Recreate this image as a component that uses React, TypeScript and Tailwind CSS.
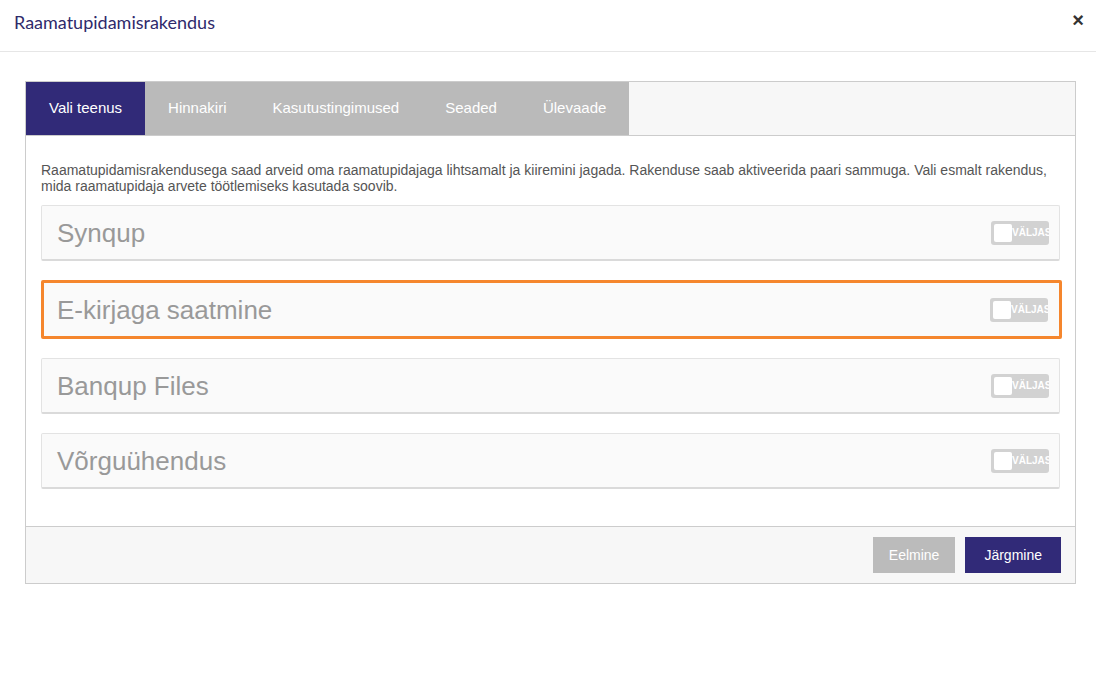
import { useState } from 'react';

const tabs = ['Vali teenus', 'Hinnakiri', 'Kasutustingimused', 'Seaded', 'Ülevaade'];
const services = ['Synqup', 'E-kirjaga saatmine', 'Banqup Files', 'Võrguühendus'];

function Toggle() {
  return (
    <div className="relative w-[58px] h-[24px] rounded-[3px] bg-[#d2d2d2] overflow-hidden">
      <div className="absolute left-[3px] top-[3px] w-[18px] h-[18px] rounded-[2px] bg-white" />
      <span className="absolute left-[21px] top-0 leading-[24px] text-[10px] font-bold text-white whitespace-nowrap">
        VÄLJAS
      </span>
    </div>
  );
}

export default function App() {
  const [active] = useState(0);
  const selected = 1;

  return (
    <div className="w-[1096px] h-[686px] bg-white font-['Liberation_Sans',Arial,sans-serif]">
      {/* Header */}
      <div className="h-[52px] border-b border-[#e6e6e6] flex items-center justify-between pl-[14px] pr-[12px]">
        <h1 className="font-['Lato',sans-serif] text-[18px] text-[#2f2a6b] -mt-[7px]">Raamatupidamisrakendus</h1>
        <button className="text-[#333] text-[20px] font-bold leading-none -mt-[11px]">×</button>
      </div>

      <div className="pl-[25px] pr-[20px] pt-[29px]">
        <div className="border border-[#cccccc]">
          {/* Tabs */}
          <div className="flex h-[54px] bg-[#f7f7f7] border-b border-[#cccccc]">
            {tabs.map((t, i) => (
              <div
                key={t}
                className={`px-[23px] flex items-center text-[15px] text-white ${
                  i === active ? 'bg-[#312a78]' : 'bg-[#bababa]'
                }`}
              >
                {t}
              </div>
            ))}
          </div>

          {/* Body */}
          <div className="px-[15px] pt-[26px] pb-[18px]">
            <p className="text-[14px] leading-[16px] text-[#555] mb-[11px]">
              Raamatupidamisrakendusega saad arveid oma raamatupidajaga lihtsamalt ja kiiremini jagada. Rakenduse saab aktiveerida paari sammuga. Vali esmalt rakendus, mida raamatupidaja arvete töötlemiseks kasutada soovib.
            </p>
            {services.map((s, i) => (
              <div
                key={s}
                className={`flex items-center justify-between bg-[#fafafa] mb-[19px] ${
                  i === selected
                    ? 'h-[59px] w-[calc(100%+2px)] border-[3px] border-[#f5862d] rounded-[2px] pl-[13px] pr-[11px]'
                    : 'h-[56px] border border-[#e3e3e3] border-b-2 border-b-[#dadada] rounded-[2px] pl-[15px] pr-[10px]'
                }`}
              >
                <span className="text-[26px] text-[#999999] mt-[2px]">{s}</span>
                <Toggle />
              </div>
            ))}
          </div>

          {/* Footer */}
          <div className="h-[57px] bg-[#f7f7f7] border-t border-[#cccccc] flex items-center justify-end gap-[10px] pr-[14px]">
            <button className="h-[36px] px-[16px] bg-[#bbbbbb] text-white text-[14px]">Eelmine</button>
            <button className="h-[36px] px-[19px] bg-[#312a78] text-white text-[14px]">Järgmine</button>
          </div>
        </div>
      </div>
    </div>
  );
}
